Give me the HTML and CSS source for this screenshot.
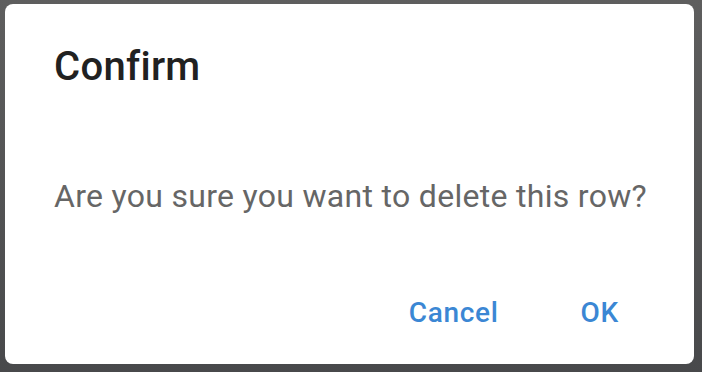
FILE: index.html
```html
<!DOCTYPE html>
<html lang="en">
<head>
  <meta charset="UTF-8" />
  <title>Confirm</title>
  <link rel="stylesheet" href="styles.css">
</head>
<body>

  <!-- CONFIRM DIALOG -->
  <div class="dialog">
    <h2 class="dialog-title">Confirm</h2>
    <p class="dialog-text">Are you sure you want to delete this row?</p>
    <div class="dialog-actions">
      <button class="btn">Cancel</button>
      <button class="btn">OK</button>
    </div>
  </div>

</body>
</html>
```

FILE: styles.css
```css
html, body {
  height: 100%;
}
body {
  font-family: Roboto, "Liberation Sans", sans-serif;
  background: linear-gradient(#5e5e5e, #48494b);
  margin: 0;
  padding: 4px 8px 8px 5px;
  box-sizing: border-box;
}
.dialog {
  background: white;
  border-radius: 8px;
  height: 360px;
  padding: 0 40px 0 49px;
  box-sizing: border-box;
  display: flex;
  flex-direction: column;
}
.dialog-title {
  font-size: 40px;
  font-weight: 500;
  letter-spacing: 0.3px;
  color: #212121;
  margin: 39px 0 0;
  line-height: 48px;
}
.dialog-text {
  font-size: 32px;
  letter-spacing: 0.3px;
  color: #666;
  margin: 85px 0 0;
  line-height: 40px;
  white-space: nowrap;
}
.dialog-actions {
  display: flex;
  justify-content: flex-end;
  gap: 50px;
  margin-top: 73px;
  margin-right: 19px;
}
.btn {
  font-family: inherit;
  font-size: 28px;
  font-weight: 500;
  line-height: 32px;
  letter-spacing: 0.7px;
  color: #3b87d4;
  background: none;
  border: none;
  padding: 8px 16px;
  cursor: pointer;
}
```
